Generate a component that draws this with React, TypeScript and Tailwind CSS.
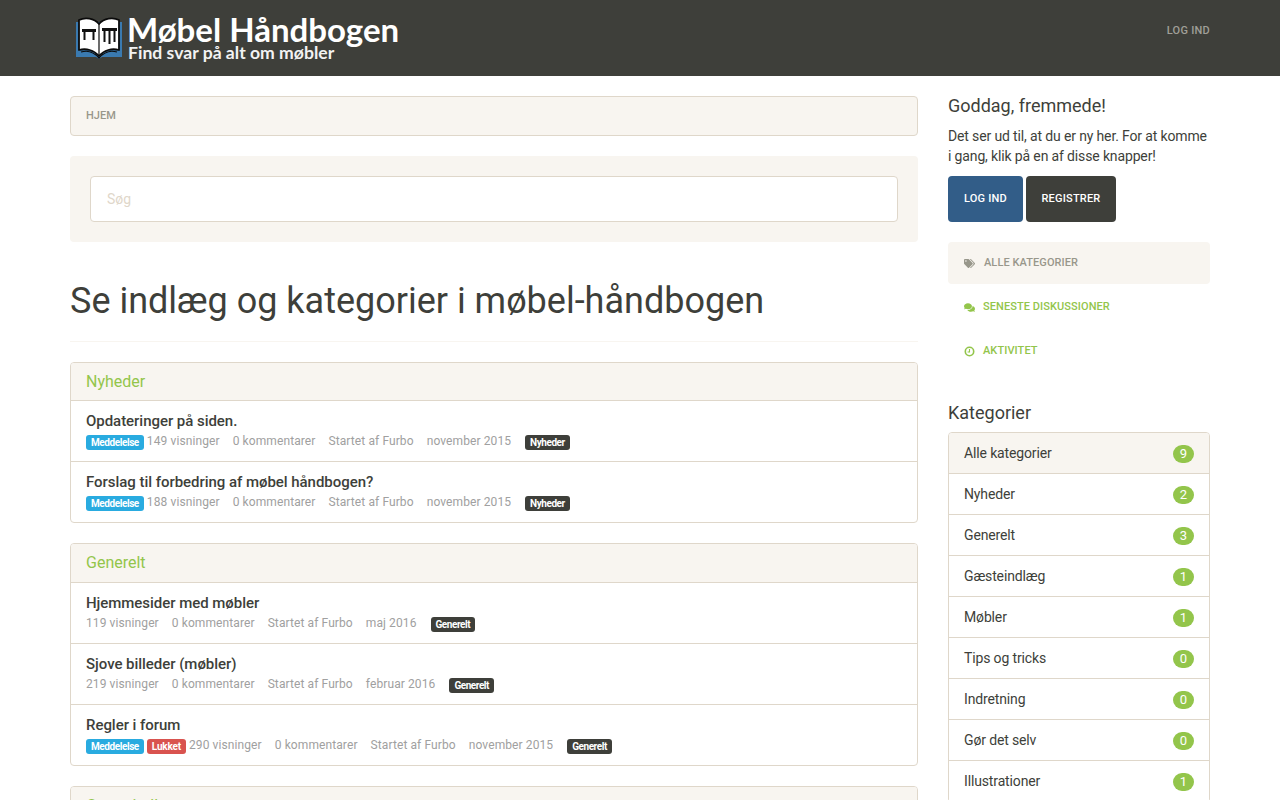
import React from "react";
import { FaTags, FaComments } from "react-icons/fa";

type Topic = { title: string; badges: ("m" | "l")[]; views: string; date: string; cat: string };

const news: Topic[] = [
  { title: "Opdateringer på siden.", badges: ["m"], views: "149", date: "november 2015", cat: "Nyheder" },
  { title: "Forslag til forbedring af møbel håndbogen?", badges: ["m"], views: "188", date: "november 2015", cat: "Nyheder" },
];
const general: Topic[] = [
  { title: "Hjemmesider med møbler", badges: [], views: "119", date: "maj 2016", cat: "Generelt" },
  { title: "Sjove billeder (møbler)", badges: [], views: "219", date: "februar 2016", cat: "Generelt" },
  { title: "Regler i forum", badges: ["m", "l"], views: "290", date: "november 2015", cat: "Generelt" },
];
const cats = [
  ["Alle kategorier", "9"],
  ["Nyheder", "2"],
  ["Generelt", "3"],
  ["Gæsteindlæg", "1"],
  ["Møbler", "1"],
  ["Tips og tricks", "0"],
  ["Indretning", "0"],
  ["Gør det selv", "0"],
  ["Illustrationer", "1"],
];

function Badge({ className, children }: { className: string; children: React.ReactNode }) {
  return (
    <span className={`mt-[3px] inline-block h-[15px] rounded-[3px] px-[5px] text-[10px] font-bold leading-[15px] text-white ${className}`}>
      {children}
    </span>
  );
}

function Row({ t }: { t: Topic }) {
  return (
    <div className="h-[61px] border-b border-[#dfd7ca] px-[15px] pt-[10px] last:h-[60px] last:border-b-0">
      <div className="text-[15px] font-medium leading-[20px] tracking-[-0.04px] text-[#3e3f3a]">{t.title}</div>
      <div className="flex h-[20px] items-center text-[12px] leading-[20px] tracking-[0.1px] text-[#a0a0a0]">
        {t.badges.map((b) =>
          b === "m" ? (
            <span key={b} className="mr-[3px] flex">
              <Badge className="bg-[#29abe0] tracking-[-0.42px]">Meddelelse</Badge>
            </span>
          ) : (
            <span key={b} className="mr-[3px] flex">
              <Badge className="bg-[#d9534f] tracking-[-0.2px]">Lukket</Badge>
            </span>
          ),
        )}
        <span className="mr-[13px]">{t.views} visninger</span>
        <span className="mr-[13px]">0 kommentarer</span>
        <span className="mr-[13px]">Startet af Furbo</span>
        <span className="mr-[14px]">{t.date}</span>
        <Badge className="bg-[#3e3f3a] tracking-[-0.45px]">{t.cat}</Badge>
      </div>
    </div>
  );
}

function Panel({ title, topics, tall }: { title: string; topics: Topic[]; tall?: boolean }) {
  return (
    <section className="mb-[20px] rounded-[4px] border border-[#dfd7ca] bg-white">
      <div className={`rounded-t-[3px] border-b border-[#dfd7ca] bg-[#f8f5f0] px-[15px] text-[16px] leading-[37px] text-[#93c54b] ${tall ? "h-[39px]" : "h-[38px]"}`}>
        {title}
      </div>
      {topics.map((t) => (
        <Row key={t.title} t={t} />
      ))}
    </section>
  );
}

function Book() {
  return (
    <svg width="54" height="46" viewBox="0 0 54 46" className="shrink-0">
      <path d="M4 8 H50 V43 H30 L27 45 L24 43 H4 Z" fill="#3a7ab0" />
      <path d="M7 6 C13 3 22 4 27 10 C32 4 41 3 47 6 L47 36 C40 34 32 36 27 42 C22 36 14 34 7 36 Z" fill="#fff" stroke="#0b0b0b" strokeWidth="1.8" strokeLinejoin="round" />
      <path d="M27 10 V42" stroke="#0b0b0b" strokeWidth="1.2" />
      <path d="M9 38 C15 36 22 38 27 44 C32 38 39 36 45 38" fill="none" stroke="#0b0b0b" strokeWidth="1.2" />
      <path d="M10 15 H24 V18 H22.5 V26 H20.5 V18 H13.5 V26 H11.5 V18 H10 Z" fill="#111" />
      <path d="M30 14 H45 V17 H43.5 V28 H41.5 V17 H38.5 V30 H36.5 V17 H33.5 V28 H31.5 V17 H30 Z" fill="#111" />
    </svg>
  );
}

function Clock() {
  return (
    <svg width="11" height="11" viewBox="0 0 11 11">
      <circle cx="5.5" cy="5.5" r="4.2" fill="none" stroke="currentColor" strokeWidth="1.6" />
      <path d="M5.5 3 V6 H3.6" fill="none" stroke="currentColor" strokeWidth="1.1" />
    </svg>
  );
}

function SideLink({ icon, label, active }: { icon: React.ReactNode; label: string; active?: boolean }) {
  return (
    <div className={`flex h-[42px] items-center rounded-[4px] px-[15px] text-[11px] font-medium uppercase tracking-[0.08px] ${active ? "bg-[#f8f5f0] text-[#98978b]" : "text-[#93c54b]"}`}>
      <span className={`flex w-[12px] justify-center text-[11px] ${active ? "mr-[9px]" : "mr-[8px]"}`}>{icon}</span>
      {label}
    </div>
  );
}

export default function App() {
  return (
    <div className="h-[800px] overflow-hidden bg-white font-['Roboto',sans-serif] text-[14px] text-[#3e3f3a]">
      <header className="h-[76px] bg-[#3e3f3a]">
        <div className="flex justify-between pl-[72px] pr-[70px]">
          <div className="flex pt-[14px]">
            <Book />
            <div className="ml-[1px] pt-[1px] font-['Lato',sans-serif] font-bold text-white">
              <div className="whitespace-nowrap text-[33px] leading-[28px]">Møbel Håndbogen</div>
              <div className="ml-[1px] whitespace-nowrap text-[17.6px] leading-[20px] text-[#f2f2f2]">Find svar på alt om møbler</div>
            </div>
          </div>
          <div className="pt-[24px] text-[11px] font-medium uppercase leading-[13px] tracking-[0.25px] text-[#a09f98]">Log ind</div>
        </div>
      </header>

      <div className="flex gap-[30px] px-[70px] pt-[20px]">
        <main className="w-[848px]">
          <nav className="mb-[20px] h-[40px] rounded-[4px] border border-[#dfd7ca] bg-[#f8f5f0] px-[15px] text-[11px] font-medium uppercase leading-[37px] text-[#98978b]">
            Hjem
          </nav>
          <div className="mb-[20px] h-[86px] rounded-[4px] bg-[#f8f5f0] p-[20px]">
            <input
              placeholder="Søg"
              className="block h-[46px] w-full rounded-[4px] border border-[#dfd7ca] bg-white px-[16px] text-[14px] outline-none placeholder:text-[#dfd7ca]"
            />
          </div>
          <div className="mb-[20px] h-[80px] border-b border-[#f8f5f0] pt-[15px]">
            <h1 className="text-[36px] font-normal leading-[48px] text-[#3e3f3a]">Se indlæg og kategorier i møbel-håndbogen</h1>
          </div>
          <Panel title="Nyheder" topics={news} />
          <Panel title="Generelt" topics={general} tall />
          <Panel title="Gæsteindlæg" topics={[]} />
        </main>

        <aside className="w-[262px]">
          <h2 className="mb-[10px] text-[18px] font-normal leading-[20px]">Goddag, fremmede!</h2>
          <p className="mb-[10px] leading-[20px] tracking-[-0.14px]">Det ser ud til, at du er ny her. For at komme i gang, klik på en af disse knapper!</p>
          <div className="mb-[20px] flex gap-[3px]">
            <button className="h-[46px] w-[75px] rounded-[4px] bg-[#325d88] text-[11px] font-medium uppercase tracking-[0.2px] text-white">Log ind</button>
            <button className="h-[46px] w-[90px] rounded-[4px] bg-[#3e3f3a] text-[11px] font-medium uppercase tracking-[0.2px] text-white">Registrer</button>
          </div>
          <div className="mb-[31px] flex flex-col gap-[2px]">
            <SideLink active icon={<FaTags />} label="Alle kategorier" />
            <SideLink icon={<FaComments />} label="Seneste diskussioner" />
            <SideLink icon={<Clock />} label="Aktivitet" />
          </div>
          <h2 className="mb-[9px] text-[18px] font-normal leading-[20px]">Kategorier</h2>
          <ul className="rounded-[4px] border border-[#dfd7ca]">
            {cats.map(([name, n], i) => (
              <li key={name} className={`flex h-[41px] items-center justify-between border-b border-[#dfd7ca] px-[15px] ${i === 0 ? "rounded-t-[3px] bg-[#f8f5f0]" : "bg-white"}`}>
                <span className="tracking-[-0.14px]">{name}</span>
                <span className="mt-[2px] h-[18px] min-w-[21px] rounded-[10px] bg-[#93c54b] px-[7px] text-center text-[13px] leading-[18px] text-white">{n}</span>
              </li>
            ))}
          </ul>
        </aside>
      </div>
    </div>
  );
}
